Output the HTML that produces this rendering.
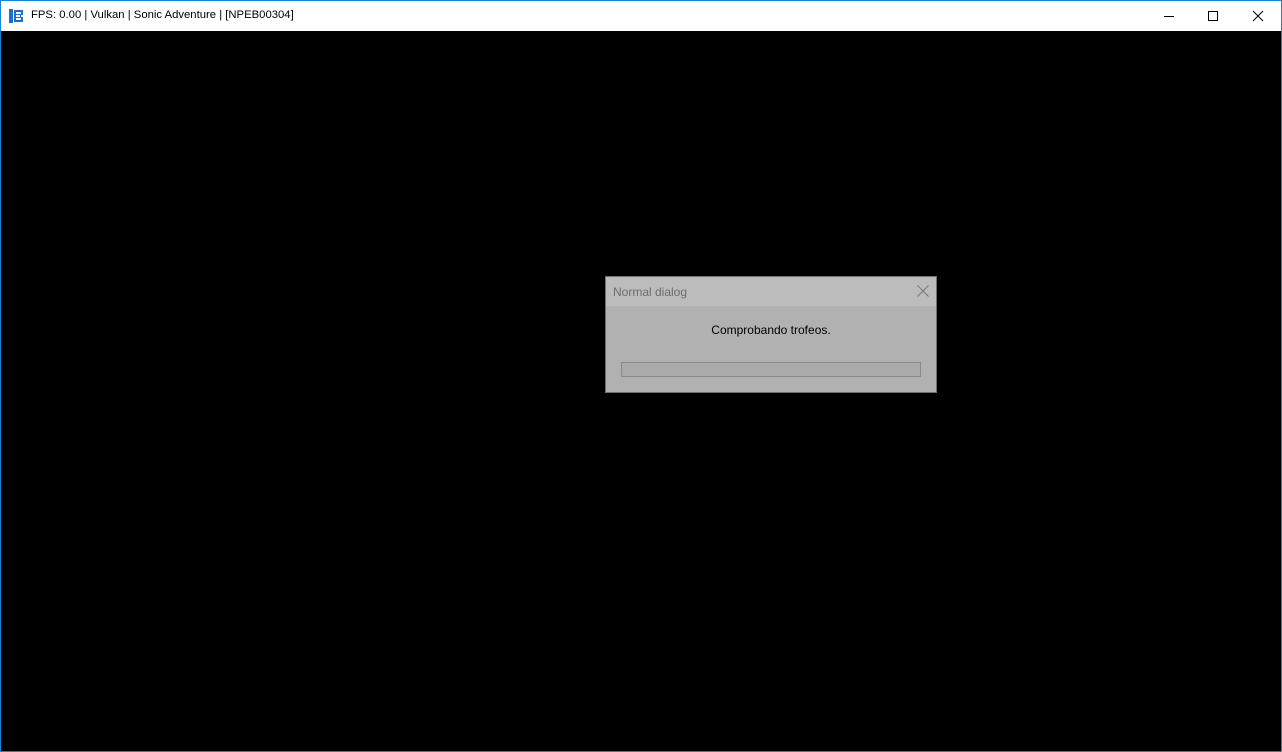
<!DOCTYPE html>
<html><head><style>
body{margin:0;width:1282px;height:752px;overflow:hidden;background:#000;font-family:"Liberation Sans",sans-serif;position:relative}
.frame{position:absolute;left:0;top:0;width:1280px;height:750px;border:1px solid #1883d7}
.tb{position:absolute;left:1px;top:1px;width:1280px;height:30px;background:#fff}
.title{position:absolute;left:30px;top:8px;font-size:11.3px;color:#000}
.dlg{position:absolute;left:605px;top:276px;width:330px;height:115px;border:1px solid #707070;background:#b1b1b1}
.dt{height:29px;background:#bcbcbc;position:relative}
.dt span{position:absolute;left:7px;top:8px;font-size:12px;color:#6d6d6d}
.msg{position:absolute;left:0;width:330px;top:46px;text-align:center;font-size:12px;color:#000}
.pb{position:absolute;left:15px;top:85px;width:298px;height:13px;border:1px solid #8a8a8a;background:#aaa}
</style></head><body>
<div class="frame"></div>
<div class="tb">
<svg style="position:absolute;left:8px;top:7px" width="16" height="16" viewBox="0 0 16 16"><rect x="0" y="1" width="4" height="14" fill="#1a6fd0"/><path d="M5 2h9v5h-2v2h2v5H5z" fill="#1a6fd0"/><rect x="7" y="4" width="5" height="2" fill="#fff"/><rect x="7" y="7" width="4" height="2" fill="#fff"/><rect x="7" y="10" width="5" height="2" fill="#fff"/></svg>
<div class="title">FPS: 0.00 | Vulkan | Sonic Adventure | [NPEB00304]</div>
<svg style="position:absolute;left:1161px;top:9px" width="110" height="14"><path d="M2 6.5h10" stroke="#000"/><rect x="46.5" y="1.5" width="9" height="9" fill="none" stroke="#000"/><path d="M91 1l10 10M101 1l-10 10" stroke="#000"/></svg>
</div>
<div class="dlg">
<div class="dt"><span>Normal dialog</span>
<svg style="position:absolute;left:311px;top:8px" width="12" height="12"><path d="M0.5 0.5l11 11M11.5 0.5l-11 11" stroke="#777"/></svg></div>
<div class="msg">Comprobando trofeos.</div>
<div class="pb"></div>
</div>
</body></html>
